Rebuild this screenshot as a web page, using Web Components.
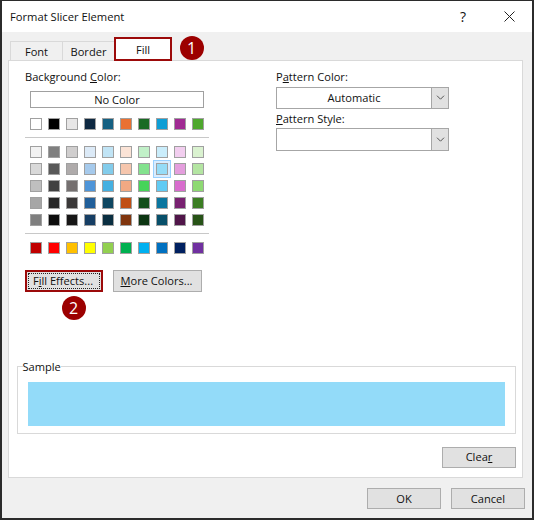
<!DOCTYPE html>
<html lang="en"><head><meta charset="utf-8"><title>Format Slicer Element</title>
<style>
html,body{margin:0;padding:0;background:#fff}
body{font:11.1px/16px "Open Sans","Noto Sans",sans-serif;color:#111}
</style></head><body>
<dlg-window>
  <dlg-title slot="title">Format Slicer Element</dlg-title>
  <dlg-tabs slot="tabs"></dlg-tabs>
  <dlg-panel slot="panel">
    <div slot="left">
      <dlg-label><span>Background <u>C</u>olor:</span></dlg-label>
      <dlg-button kind="flat" w="174" h="17" style="margin:6px 0 0 5px;padding-top:1px">No Color</dlg-button>
      <swatch-grid style="margin:10px 0 0 5px" colors="ffffff 000000 e7e6e6 0e2841 156082 e97132 196b24 0f9ed5 a02b93 4ea72e"></swatch-grid>
      <dlg-rule style="margin-top:7px"></dlg-rule>
      <swatch-grid style="margin:8px 0 0 5px" selected="17" colors="f2f2f2 7f7f7f d0cece dceaf7 c1e4f5 fbe3d6 c1f0c8 caedfb f2ceef daf2d0 d9d9d9 595959 afabab a6caec 83cceb f6c6ad 83e28e 95dcf7 e49edd b4e5a2 bfbfbf 404040 757070 4e95d9 45b0e1 f1a983 47d459 61cbf3 d86dcd 8ed973 a6a6a6 262626 3a3838 215f9a 0f4761 c04f15 124f1a 0b769f 782170 3b7d23 7f7f7f 0d0d0d 171616 163e64 0a2f41 80350e 0c3512 074f6a 501549 275317"></swatch-grid>
      <dlg-rule style="margin-top:7px"></dlg-rule>
      <swatch-grid style="margin:8px 0 0 5px" colors="c00000 ff0000 ffc000 ffff00 92d050 00b050 00b0f0 0070c0 002060 7030a0"></swatch-grid>
      <div style="display:flex;gap:10px;margin-top:16px">
        <dlg-button kind="marked" w="78" h="22" style="padding-right:2px">F<u>i</u>ll Effects...</dlg-button>
        <dlg-button w="89" h="22" style="padding-right:2px"><u>M</u>ore Colors...</dlg-button>
      </div>
    </div>
    <div slot="right">
      <dlg-label>P<u>a</u>ttern Color:</dlg-label>
      <dlg-select value="Automatic" style="margin-top:2px"></dlg-select>
      <dlg-label style="margin-top:2px"><u>P</u>attern Style:</dlg-label>
      <dlg-select style="margin-top:1px;height:23px"></dlg-select>
    </div>
    <sample-box slot="sample" color="#93dbf9">Sample</sample-box>
    <dlg-button slot="clear" w="74" h="21">Clea<u>r</u></dlg-button>
  </dlg-panel>
  <div slot="footer" style="display:flex;gap:10px;justify-content:flex-end">
    <dlg-button w="74" h="21">OK</dlg-button>
    <dlg-button w="74" h="21">Cancel</dlg-button>
  </div>
  <step-badge slot="marks" style="left:177.5px;top:34.5px">1</step-badge>
  <step-badge slot="marks" style="left:59.7px;top:295px">2</step-badge>
</dlg-window>
<script>
function shadow(el,html){el.attachShadow({mode:'open'}).innerHTML=html;return el.shadowRoot;}

customElements.define('dlg-window',class extends HTMLElement{constructor(){super();shadow(this,`<style>
:host{display:block;position:relative;width:534px;height:520px;box-sizing:border-box;background:#f0f0f0;border:solid #2b2b2b;border-width:1px 2px 2px 2px;overflow:hidden}
.tabs{margin-top:5px;padding-left:8px}
.panel{margin-left:6px;margin-right:9px}
.footer{padding:10px 7px 0 0}
</style>
<slot name="title"></slot><div class="tabs"><slot name="tabs"></slot></div>
<div class="panel"><slot name="panel"></slot></div>
<div class="footer"><slot name="footer"></slot></div><slot name="marks"></slot>`);}});

customElements.define('dlg-title',class extends HTMLElement{constructor(){super();shadow(this,`<style>
:host{display:flex;align-items:center;height:31px;background:#fff;padding-left:8px;font-size:11.2px;color:#111}
.sp{flex:1}.i{display:flex;align-items:center;justify-content:center}
.help{width:16px;font-size:14px;margin-right:33px}
svg{display:block;margin-right:17px}
</style><slot></slot><span class="sp"></span><span class="i help">?</span>
<svg width="11" height="11" viewBox="0 0 11 11"><path d="M.5.5l10 10M10.5.5l-10 10" stroke="#222" stroke-width="1" fill="none"/></svg>`);}});

customElements.define('dlg-tabs',class extends HTMLElement{constructor(){super();shadow(this,`<style>
:host{display:flex;align-items:flex-end;height:23px}
div{box-sizing:border-box;display:flex;align-items:center;justify-content:center;height:19px;padding-top:2px;border-top:1px solid #d9d9d9;border-left:1px solid #d9d9d9;font-size:11.1px}
.a{width:52px}.b{width:52px}
.c{width:58px;height:24px;border:2px solid #9c0a0a;background:#fff;padding:2px 0 0;position:relative;top:1px;z-index:1}
</style><div class="a">Font</div><div class="b">Border</div><div class="c">Fill</div>`);}});

customElements.define('dlg-panel',class extends HTMLElement{constructor(){super();shadow(this,`<style>
:host{display:block;box-sizing:border-box;height:418px;background:#fff;border:1.5px solid #d9d9d9;padding:7.5px 6px 0 8px;position:relative}
.top{display:grid;grid-template-columns:184px 173px;column-gap:67px;margin-left:8px;height:292px}
.clear{display:flex;justify-content:flex-end;margin-top:13px}
</style><div class="top"><slot name="left"></slot><slot name="right"></slot></div>
<slot name="sample"></slot><div class="clear"><slot name="clear"></slot></div>`);}});

customElements.define('dlg-label',class extends HTMLElement{constructor(){super();shadow(this,`<style>
:host{display:block;font-size:11.1px;line-height:16px}
</style><slot></slot>`);}});

customElements.define('dlg-rule',class extends HTMLElement{constructor(){super();shadow(this,`<style>
:host{display:block;height:1px;background:#c8c8c8}
</style>`);}});

customElements.define('dlg-button',class extends HTMLElement{constructor(){super();
const w=this.getAttribute('w'),h=this.getAttribute('h');shadow(this,`<style>
:host{display:flex;align-items:center;justify-content:center;box-sizing:border-box;width:${w}px;height:${h}px;background:#e1e1e1;border:1.5px solid #adadad;font-size:11.1px;color:#111}
:host([kind=flat]){background:#fff;border-color:#a0a0a0}
:host([kind=marked]){border:2px solid #9c0a0a;padding-right:0 !important}
.f{display:flex;align-items:center;justify-content:center;align-self:stretch;flex:1;margin:1px;padding-right:2px;outline:1px dotted #222;outline-offset:-1px}
</style>${this.getAttribute('kind')==='marked'?'<span class="f"><slot></slot></span>':'<slot></slot>'}`);}});

customElements.define('dlg-select',class extends HTMLElement{constructor(){super();
const v=this.getAttribute('value')||'';shadow(this,`<style>
:host{display:flex;box-sizing:border-box;height:22px;background:#fff;border:1.5px solid #a6a6a6}
.v{flex:1;text-align:center;line-height:19px;font-size:11.1px}
.b{width:16px;background:#e1e1e1;border-left:1.5px solid #a6a6a6;display:flex;align-items:center;justify-content:center}
</style><span class="v">${v}</span><span class="b"><svg width="9" height="5" viewBox="0 0 9 5"><path d="M1 .7l3.5 3.5L8 .7" stroke="#555" fill="none"/></svg></span>`);}});

customElements.define('swatch-grid',class extends HTMLElement{constructor(){super();
const sel=+(this.getAttribute('selected')??-1);
const cells=this.getAttribute('colors').trim().split(/\s+/).map((c,i)=>`<i class="${i===sel?'s':''}" style="background:#${c}"></i>`).join('');
shadow(this,`<style>
:host{display:grid;grid-template-columns:repeat(10,12px);column-gap:6px;row-gap:5px;width:174px}
i{display:block;box-sizing:border-box;width:12px;height:12px;border:1.5px solid #a0a0a0}
.s{box-shadow:0 0 0 2px #d9edff,0 0 0 3px #99d1ff}
</style>${cells}`);}});

customElements.define('sample-box',class extends HTMLElement{constructor(){super();
shadow(this,`<style>
:host{display:block}
fieldset{margin:0;box-sizing:border-box;height:73px;padding:9px 10.5px 0 9.5px;border:1.5px solid #d9d9d9;border-radius:0}
legend{padding:0;margin-left:-5px;font-size:11.1px;line-height:12px}
div{height:44px;background:${this.getAttribute('color')}}
</style><fieldset><legend><slot></slot></legend><div></div></fieldset>`);}});

customElements.define('step-badge',class extends HTMLElement{constructor(){super();shadow(this,`<style>
:host{position:absolute;display:flex;align-items:center;justify-content:center;width:24px;height:24px;border-radius:50%;background:#9c0000;color:#fff;font-size:16px;line-height:24px}
</style><slot></slot>`);}});
</script>
</body></html>
